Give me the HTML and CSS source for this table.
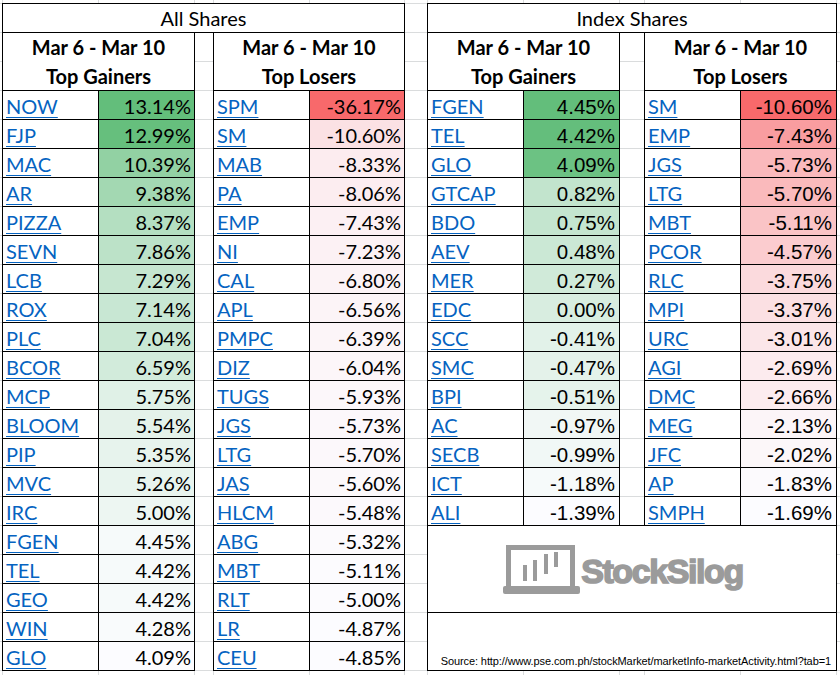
FILE: index.html
```html
<!DOCTYPE html>
<html lang="en">
<head>
<meta charset="utf-8">
<title>Top Gainers and Losers</title>
<link rel="stylesheet" href="styles.css">
</head>
<body>
<div class="sheet">
  <div class="ruler top">
    <span></span><span></span><span></span><span></span><span></span><span></span><span></span><span></span><span></span><span></span><span></span><span></span>
  </div>
  <div class="main">
    <div class="lead"></div>

    <section class="block all">
      <div class="title">All Shares</div>
      <div class="pair">
        <div class="list">
          <div class="head">Mar 6 - Mar 10<br>Top Gainers</div>
          <a class="name" href="#">NOW</a><div class="val" style="background:rgb(99,190,123)">13.14%</div>
          <a class="name" href="#">FJP</a><div class="val" style="background:rgb(102,191,125)">12.99%</div>
          <a class="name" href="#">MAC</a><div class="val" style="background:rgb(146,209,163)">10.39%</div>
          <a class="name" href="#">AR</a><div class="val" style="background:rgb(163,216,178)">9.38%</div>
          <a class="name" href="#">PIZZA</a><div class="val" style="background:rgb(180,223,193)">8.37%</div>
          <a class="name" href="#">SEVN</a><div class="val" style="background:rgb(188,226,200)">7.86%</div>
          <a class="name" href="#">LCB</a><div class="val" style="background:rgb(198,230,208)">7.29%</div>
          <a class="name" href="#">ROX</a><div class="val" style="background:rgb(200,231,211)">7.14%</div>
          <a class="name" href="#">PLC</a><div class="val" style="background:rgb(202,232,212)">7.04%</div>
          <a class="name" href="#">BCOR</a><div class="val" style="background:rgb(210,235,219)">6.59%</div>
          <a class="name" href="#">MCP</a><div class="val" style="background:rgb(224,241,231)">5.75%</div>
          <a class="name" href="#">BLOOM</a><div class="val" style="background:rgb(228,242,234)">5.54%</div>
          <a class="name" href="#">PIP</a><div class="val" style="background:rgb(231,243,237)">5.35%</div>
          <a class="name" href="#">MVC</a><div class="val" style="background:rgb(232,244,238)">5.26%</div>
          <a class="name" href="#">IRC</a><div class="val" style="background:rgb(237,246,242)">5.00%</div>
          <a class="name" href="#">FGEN</a><div class="val" style="background:rgb(246,250,250)">4.45%</div>
          <a class="name" href="#">TEL</a><div class="val" style="background:rgb(246,250,250)">4.42%</div>
          <a class="name" href="#">GEO</a><div class="val" style="background:rgb(246,250,250)">4.42%</div>
          <a class="name" href="#">WIN</a><div class="val" style="background:rgb(249,251,252)">4.28%</div>
          <a class="name" href="#">GLO</a><div class="val" style="background:rgb(252,252,255)">4.09%</div>
        </div>
        <div class="gutter narrow-gap"></div>
        <div class="list slim">
          <div class="head">Mar 6 - Mar 10<br>Top Losers</div>
          <a class="name" href="#">SPM</a><div class="val" style="background:rgb(248,105,107)">-36.17%</div>
          <a class="name" href="#">SM</a><div class="val" style="background:rgb(251,225,228)">-10.60%</div>
          <a class="name" href="#">MAB</a><div class="val" style="background:rgb(252,236,239)">-8.33%</div>
          <a class="name" href="#">PA</a><div class="val" style="background:rgb(252,237,240)">-8.06%</div>
          <a class="name" href="#">EMP</a><div class="val" style="background:rgb(252,240,243)">-7.43%</div>
          <a class="name" href="#">NI</a><div class="val" style="background:rgb(252,241,244)">-7.23%</div>
          <a class="name" href="#">CAL</a><div class="val" style="background:rgb(252,243,246)">-6.80%</div>
          <a class="name" href="#">APL</a><div class="val" style="background:rgb(252,244,247)">-6.56%</div>
          <a class="name" href="#">PMPC</a><div class="val" style="background:rgb(252,245,248)">-6.39%</div>
          <a class="name" href="#">DIZ</a><div class="val" style="background:rgb(252,246,249)">-6.04%</div>
          <a class="name" href="#">TUGS</a><div class="val" style="background:rgb(252,247,250)">-5.93%</div>
          <a class="name" href="#">JGS</a><div class="val" style="background:rgb(252,248,251)">-5.73%</div>
          <a class="name" href="#">LTG</a><div class="val" style="background:rgb(252,248,251)">-5.70%</div>
          <a class="name" href="#">JAS</a><div class="val" style="background:rgb(252,249,251)">-5.60%</div>
          <a class="name" href="#">HLCM</a><div class="val" style="background:rgb(252,249,252)">-5.48%</div>
          <a class="name" href="#">ABG</a><div class="val" style="background:rgb(252,250,253)">-5.32%</div>
          <a class="name" href="#">MBT</a><div class="val" style="background:rgb(252,251,254)">-5.11%</div>
          <a class="name" href="#">RLT</a><div class="val" style="background:rgb(252,251,254)">-5.00%</div>
          <a class="name" href="#">LR</a><div class="val" style="background:rgb(252,252,255)">-4.87%</div>
          <a class="name" href="#">CEU</a><div class="val" style="background:rgb(252,252,255)">-4.85%</div>
        </div>
      </div>
    </section>

    <div class="gap-col"></div>

    <section class="block index">
      <div class="title">Index Shares</div>
      <div class="pair">
        <div class="list arial">
          <div class="head">Mar 6 - Mar 10<br>Top Gainers</div>
          <a class="name" href="#">FGEN</a><div class="val" style="background:rgb(99,190,123)">4.45%</div>
          <a class="name" href="#">TEL</a><div class="val" style="background:rgb(100,190,124)">4.42%</div>
          <a class="name" href="#">GLO</a><div class="val" style="background:rgb(108,194,131)">4.09%</div>
          <a class="name" href="#">GTCAP</a><div class="val" style="background:rgb(194,228,205)">0.82%</div>
          <a class="name" href="#">BDO</a><div class="val" style="background:rgb(196,229,207)">0.75%</div>
          <a class="name" href="#">AEV</a><div class="val" style="background:rgb(203,232,213)">0.48%</div>
          <a class="name" href="#">MER</a><div class="val" style="background:rgb(208,234,217)">0.27%</div>
          <a class="name" href="#">EDC</a><div class="val" style="background:rgb(216,237,224)">0.00%</div>
          <a class="name" href="#">SCC</a><div class="val" style="background:rgb(226,242,233)">-0.41%</div>
          <a class="name" href="#">SMC</a><div class="val" style="background:rgb(228,242,234)">-0.47%</div>
          <a class="name" href="#">BPI</a><div class="val" style="background:rgb(229,243,235)">-0.51%</div>
          <a class="name" href="#">AC</a><div class="val" style="background:rgb(241,247,245)">-0.97%</div>
          <a class="name" href="#">SECB</a><div class="val" style="background:rgb(241,248,246)">-0.99%</div>
          <a class="name" href="#">ICT</a><div class="val" style="background:rgb(246,250,250)">-1.18%</div>
          <a class="name" href="#">ALI</a><div class="val" style="background:rgb(252,252,255)">-1.39%</div>
        </div>
        <div class="gutter wide-gap"></div>
        <div class="list arial">
          <div class="head">Mar 6 - Mar 10<br>Top Losers</div>
          <a class="name" href="#">SM</a><div class="val" style="background:rgb(248,105,107)">-10.60%</div>
          <a class="name" href="#">EMP</a><div class="val" style="background:rgb(249,157,160)">-7.43%</div>
          <a class="name" href="#">JGS</a><div class="val" style="background:rgb(250,185,188)">-5.73%</div>
          <a class="name" href="#">LTG</a><div class="val" style="background:rgb(250,186,188)">-5.70%</div>
          <a class="name" href="#">MBT</a><div class="val" style="background:rgb(250,196,198)">-5.11%</div>
          <a class="name" href="#">PCOR</a><div class="val" style="background:rgb(251,204,207)">-4.57%</div>
          <a class="name" href="#">RLC</a><div class="val" style="background:rgb(251,218,221)">-3.75%</div>
          <a class="name" href="#">MPI</a><div class="val" style="background:rgb(251,224,227)">-3.37%</div>
          <a class="name" href="#">URC</a><div class="val" style="background:rgb(251,230,233)">-3.01%</div>
          <a class="name" href="#">AGI</a><div class="val" style="background:rgb(252,235,238)">-2.69%</div>
          <a class="name" href="#">DMC</a><div class="val" style="background:rgb(252,236,239)">-2.66%</div>
          <a class="name" href="#">MEG</a><div class="val" style="background:rgb(252,245,248)">-2.13%</div>
          <a class="name" href="#">JFC</a><div class="val" style="background:rgb(252,247,249)">-2.02%</div>
          <a class="name" href="#">AP</a><div class="val" style="background:rgb(252,250,253)">-1.83%</div>
          <a class="name" href="#">SMPH</a><div class="val" style="background:rgb(252,252,255)">-1.69%</div>
        </div>
      </div>
      <div class="logo">
        <svg class="laptop" width="77" height="50" viewBox="0 0 77 50" aria-hidden="true">
          <rect x="5.5" y="3.5" width="64" height="42" fill="none" stroke="#9b9b9b" stroke-width="5"/>
          <rect x="0" y="42" width="77" height="8" rx="2" fill="#9b9b9b"/>
          <rect x="20" y="21" width="4" height="16" fill="#9b9b9b"/>
          <rect x="30" y="16" width="4" height="21" fill="#9b9b9b"/>
          <rect x="41" y="10" width="4" height="20" fill="#9b9b9b"/>
          <rect x="51" y="8" width="4" height="15" fill="#9b9b9b"/>
        </svg>
        <span class="brand">StockSilog</span>
      </div>
      <div class="source">Source: http://www.pse.com.ph/stockMarket/marketInfo-marketActivity.html?tab=1</div>
    </section>
  </div>
  <div class="ruler bottom">
    <span></span><span></span><span></span><span></span><span></span><span></span><span></span><span></span><span></span><span></span><span></span><span></span>
  </div>
</div>
</body>
</html>
```

FILE: styles.css
```css
* { box-sizing: border-box; }

body {
  margin: 0;
  background: #fff;
}

.sheet {
  width: 840px;
  height: 675px;
  overflow: hidden;
  display: flex;
  flex-direction: column;
  font-family: Lato, "Liberation Sans", sans-serif;
  color: #000;
  background-color: #fff;
  background-image: linear-gradient(to bottom, #dadcdd 1px, transparent 1px);
  background-size: 100% 29px;
  background-position: 0 3px;
}

.ruler {
  display: grid;
  grid-template-columns: 3px 96px 96px 19px 96px 95px 23px 96px 96px 25px 96px 96px;
  flex: none;
}
.ruler.top { height: 3px; }
.ruler.bottom { height: 4px; }
.ruler span { border-right: 1px solid #dadcdd; }

.main {
  display: flex;
  flex: none;
  height: 668px;
}

.lead { width: 2px; flex: none; }
.gap-col { width: 22px; flex: none; }

.block {
  display: flex;
  flex-direction: column;
  flex: none;
}
.block.all { width: 403px; }
.block.index { width: 410px; }

.title {
  height: 30px;
  border: 1px solid #000;
  background: #fff;
  text-align: center;
  font-size: 20px;
  line-height: 28px;
}

.pair {
  display: flex;
}

.gutter { flex: none; }
.gutter.narrow-gap { width: 18px; }
.gutter.wide-gap { width: 24px; }

.list {
  display: grid;
  grid-template-columns: 96px 96px;
  grid-auto-rows: 29px;
  border-left: 1px solid #000;
  flex: none;
}
.list.slim { grid-template-columns: 96px 95px; }

.head,
.name,
.val {
  border-right: 1px solid #000;
  border-bottom: 1px solid #000;
  background: #fff;
}

.head {
  grid-column: 1 / -1;
  grid-row: span 2;
  text-align: center;
  font-weight: 700;
  font-size: 20px;
  line-height: 29px;
  margin-top: -1px;
  padding-top: 0;
  border-top: 1px solid transparent;
  background-clip: padding-box;
}

.name {
  display: flex;
  align-items: flex-end;
  padding: 0 0 3px 3px;
  font-size: 20px;
  line-height: 1;
  color: #0563c1;
  text-decoration: underline;
  text-decoration-thickness: 1px;
  text-underline-offset: 3px;
}

.val {
  display: flex;
  align-items: flex-end;
  justify-content: flex-end;
  padding: 0 3px 3px 0;
  font-size: 20px;
  line-height: 1;
}

.list.arial .val {
  font-family: "Liberation Sans", Arial, sans-serif;
  font-size: 20.5px;
  padding: 0 4px 2px 0;
}

.logo {
  height: 88px;
  margin-top: -1px;
  border: 1px solid #000;
  background: #fff;
  display: flex;
  align-items: center;
  justify-content: center;
  padding: 0 18px 0 0;
}

.laptop { flex: none; display: block; }

.brand {
  font-family: "Liberation Sans", Arial, sans-serif;
  font-weight: 700;
  font-size: 34px;
  letter-spacing: -1.4px;
  color: #9b9b9b;
  -webkit-text-stroke: 1.6px #9b9b9b;
  line-height: 1;
  margin-top: 4px;
  margin-left: 1px;
}

.source {
  height: 58px;
  border: 1px solid #000;
  border-top: 0;
  background: #fff;
  display: flex;
  align-items: flex-end;
  justify-content: flex-end;
  padding: 0 5px 3px 0;
  font-family: "Liberation Sans", Arial, sans-serif;
  font-size: 11px;
  letter-spacing: -0.1px;
  line-height: 1;
}
```
